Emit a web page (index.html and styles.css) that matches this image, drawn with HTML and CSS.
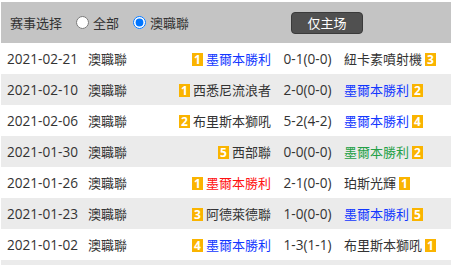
FILE: index.html
```html
<!DOCTYPE html>
<html lang="zh">
<head>
<meta charset="utf-8">
<link rel="stylesheet" href="styles.css">
</head>
<body>
<div class="panel">
  <div class="filter">
    <span class="filter-title">赛事选择</span>
    <label class="opt"><input type="radio" name="lg"><span>全部</span></label>
    <label class="opt"><input type="radio" name="lg" checked><span>澳職聯</span></label>
    <button class="home-btn">仅主场</button>
  </div>
  <div class="rows">
    <div class="row">
      <span class="date">2021-02-21</span><span class="league">澳職聯</span>
      <span class="home"><i class="rank">1</i><em class="blue">墨爾本勝利</em></span>
      <span class="score">0-1(0-0)</span>
      <span class="away"><em>紐卡素噴射機</em><i class="rank">3</i></span>
    </div>
    <div class="row alt">
      <span class="date">2021-02-10</span><span class="league">澳職聯</span>
      <span class="home"><i class="rank">1</i><em>西悉尼流浪者</em></span>
      <span class="score">2-0(0-0)</span>
      <span class="away"><em class="blue">墨爾本勝利</em><i class="rank">2</i></span>
    </div>
    <div class="row">
      <span class="date">2021-02-06</span><span class="league">澳職聯</span>
      <span class="home"><i class="rank">2</i><em>布里斯本獅吼</em></span>
      <span class="score">5-2(4-2)</span>
      <span class="away"><em class="blue">墨爾本勝利</em><i class="rank">4</i></span>
    </div>
    <div class="row alt">
      <span class="date">2021-01-30</span><span class="league">澳職聯</span>
      <span class="home"><i class="rank">5</i><em>西部聯</em></span>
      <span class="score">0-0(0-0)</span>
      <span class="away"><em class="green">墨爾本勝利</em><i class="rank">2</i></span>
    </div>
    <div class="row">
      <span class="date">2021-01-26</span><span class="league">澳職聯</span>
      <span class="home"><i class="rank">1</i><em class="red">墨爾本勝利</em></span>
      <span class="score">2-1(0-0)</span>
      <span class="away"><em>珀斯光輝</em><i class="rank">1</i></span>
    </div>
    <div class="row alt">
      <span class="date">2021-01-23</span><span class="league">澳職聯</span>
      <span class="home"><i class="rank">3</i><em>阿德萊德聯</em></span>
      <span class="score">1-0(0-0)</span>
      <span class="away"><em class="blue">墨爾本勝利</em><i class="rank">5</i></span>
    </div>
    <div class="row">
      <span class="date">2021-01-02</span><span class="league">澳職聯</span>
      <span class="home"><i class="rank">4</i><em class="blue">墨爾本勝利</em></span>
      <span class="score">1-3(1-1)</span>
      <span class="away"><em>布里斯本獅吼</em><i class="rank">1</i></span>
    </div>
    <div class="row alt"></div>
  </div>
</div>
</body>
</html>
```

FILE: styles.css
```css
* { box-sizing: border-box; }
html, body { margin: 0; padding: 0; background: #fff; }
body {
  font-family: "Open Sans", "Noto Sans CJK SC", sans-serif;
  font-size: 13px;
  color: #333;
  overflow: hidden;
}
.panel { margin: 2px 0 0 1px; }
.filter {
  height: 41px;
  background: #c4c4c4;
  display: flex;
  align-items: center;
  padding-left: 9px;
}
.filter-title { margin-right: 14px; }
.opt { display: flex; align-items: center; margin-right: 14px; }
.opt input { margin: 0 4px 0 0; width: 13px; height: 13px; }
.home-btn {
  margin-left: 88px;
  width: 72px;
  height: 22px;
  background: #505050;
  border: 1px solid #3a3a3a;
  border-radius: 4px;
  color: #fff;
  font-family: "Noto Sans CJK SC", sans-serif;
  font-size: 13px;
  padding: 0;
  line-height: 20px;
}
.row {
  height: 31px;
  display: grid;
  grid-template-columns: 81px 60px 123px 73px 1fr;
  align-items: center;
  padding-left: 6px;
  white-space: nowrap;
}
.row.alt { background: #ebebeb; }
.date, .score { font-size: 13.6px; }
.home { text-align: right; }
.score { text-align: center; }
.away { text-align: left; }
em { font-style: normal; }
.blue { color: #1237ff; }
.red { color: #ff1111; }
.green { color: #24a047; }
.rank {
  display: inline-block;
  width: 11px;
  height: 13px;
  line-height: 13px;
  background: #fab400;
  color: #fff;
  font-style: normal;
  font-weight: bold;
  font-size: 12px;
  text-align: center;
  vertical-align: middle;
  margin: -2px 3px 0;
}
.home .rank { margin-left: 0; }
.away .rank { margin-right: 0; }
```
